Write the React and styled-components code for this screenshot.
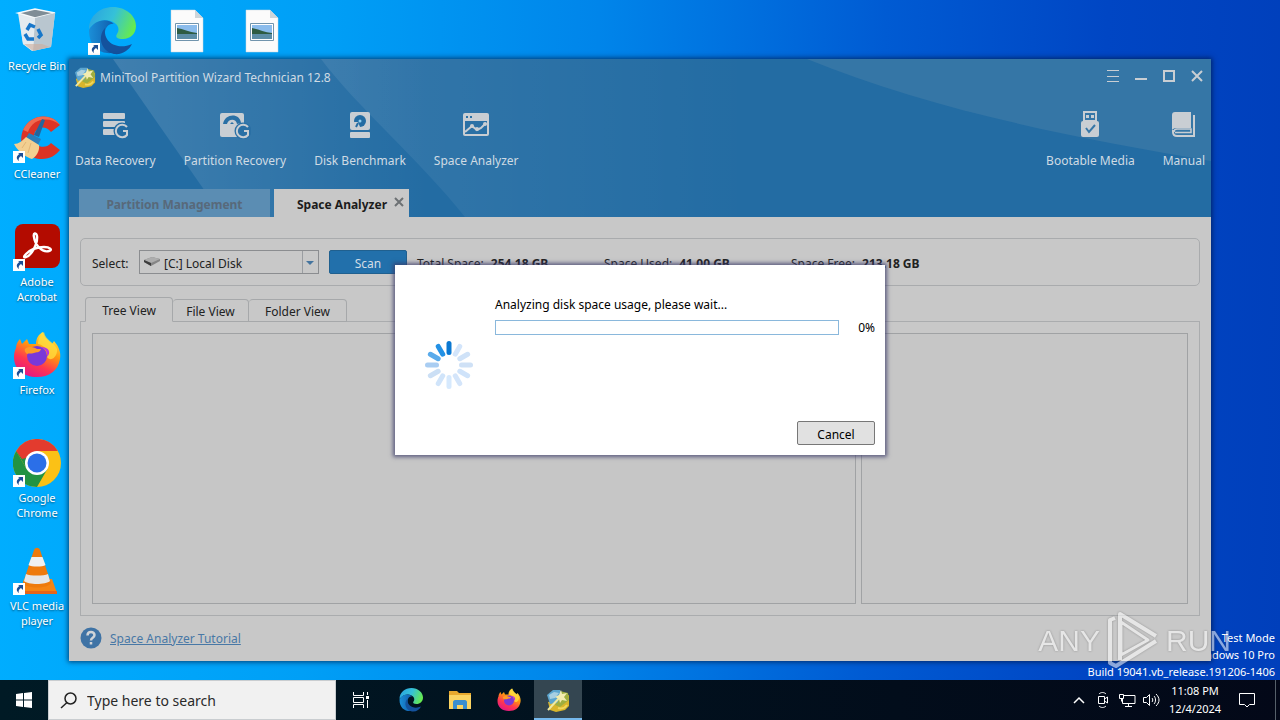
import React from 'react';
import styled, { createGlobalStyle } from 'styled-components';

const GlobalStyle = createGlobalStyle`
    * {
        box-sizing: border-box;
    }
    body {
        margin: 0;
        overflow: hidden;
        font-family: 'Noto Sans', 'Open Sans', sans-serif;
        font-size: 12px;
        line-height: 18px;
    }
    button, select, input {
        font: inherit;
        color: inherit;
        border: 0;
        padding: 0;
        margin: 0;
        background: none;
        border-radius: 0;
    }
`;

/* ---------- desktop ---------- */

const Screen = styled.div`
    height: 100vh;
    display: flex;
    flex-direction: column;
    overflow: hidden;
`;

const Desktop = styled.main`
    position: relative;
    flex: 1;
    min-height: 0;
    background: linear-gradient(
        92deg,
        #00aeff 0%,
        #009ff6 25%,
        #0085ea 46%,
        #005bd3 68%,
        #0046c4 85%,
        #003fbb 100%
    );
`;

const IconGrid = styled.div`
    display: grid;
    grid-template-rows: repeat(6, 108px);
    grid-auto-columns: 74px;
    grid-auto-flow: column;
    column-gap: 1px;
    justify-content: start;
    padding-top: 7px;
`;

const Shortcut = styled.button`
    grid-row: ${(props) => props.$row};
    grid-column: ${(props) => props.$col};
    display: flex;
    flex-direction: column;
    align-items: center;
    gap: 3px;
    color: #fff;
    font-size: 11px;
    line-height: 15px;
    text-shadow: 0 1px 2px rgba(0, 0, 0, 0.5);
    svg {
        flex: none;
    }
`;

const ShortcutLabel = styled.span`
    max-width: 66px;
`;

const Build = styled.div`
    position: absolute;
    right: 5px;
    bottom: 0;
    color: #fff;
    font-size: 11px;
    line-height: 17px;
    text-align: right;
`;

/* ---------- application window ---------- */

const Window = styled.section`
    position: absolute;
    inset: 59px 69px 19px;
    display: flex;
    flex-direction: column;
    background: #c8c8c8;
    color: #222;
    box-shadow: 0 0 5px 1px rgba(0, 20, 60, 0.7);
`;

const Header = styled.header`
    position: relative;
    background: #236ca3;
    color: #cfdbe4;
`;

const Backdrop = styled.svg`
    position: absolute;
    width: 100%;
    height: 100%;
`;

const TitleBar = styled.div`
    position: relative;
    display: flex;
    align-items: center;
    height: 36px;
    padding: 0 7px 0 5px;
    gap: 4px;
`;

const Title = styled.h1`
    flex: 1;
    margin: 0;
    padding-top: 2px;
    font-size: 12px;
    font-weight: 400;
`;

const WindowButtons = styled.div`
    display: flex;
    gap: 14px;
    padding-bottom: 2px;
    button {
        width: 14px;
        height: 14px;
    }
    svg {
        display: block;
    }
`;

const Toolbar = styled.div`
    position: relative;
    display: flex;
    height: 94px;
    gap: 28px;
    padding: 16px 6px 0;
`;

const Tool = styled.button`
    display: flex;
    flex-direction: column;
    align-items: center;
    gap: 13px;
    align-self: start;
    white-space: nowrap;
    margin-left: ${(props) => (props.$pushed ? 'auto' : '0')};
`;

const PageTabs = styled.div`
    position: relative;
    display: flex;
    gap: 4px;
    padding-left: 10px;
`;

const PageTab = styled.div`
    display: flex;
    align-items: center;
    justify-content: ${(props) => (props.$active ? 'flex-end' : 'center')};
    gap: 7px;
    width: ${(props) => (props.$active ? '135px' : '191px')};
    height: 28px;
    padding: ${(props) => (props.$active ? '3px 5px 0 0' : '3px 0 0')};
    background: ${(props) => (props.$active ? '#c8c8c8' : '#5b8db3')};
    color: ${(props) => (props.$active ? '#1c1c1c' : '#58697a')};
    button {
        font-weight: 700;
    }
`;

const Body = styled.div`
    flex: 1;
    min-height: 0;
    display: flex;
    flex-direction: column;
    padding: 21px 11px 12px;
`;

const SelectBar = styled.div`
    display: flex;
    align-items: center;
    height: 48px;
    padding: 0 11px;
    border: 1px solid #a9abad;
    border-radius: 5px;
    white-space: nowrap;
`;

const SelectLabel = styled.label`
    width: 47px;
    padding-top: 3px;
`;

const DiskField = styled.div`
    display: flex;
    align-items: center;
    width: 180px;
    height: 24px;
    padding-left: 4px;
    border: 1px solid #8b8d90;
    select {
        flex: 1;
        height: 22px;
        padding: 3px 0 0 3px;
        appearance: none;
        outline: 0;
    }
    svg {
        flex: none;
        pointer-events: none;
    }
`;

const Arrow = styled.svg`
    border-left: 1px solid #9a9da1;
`;

const Scan = styled.button`
    width: 78px;
    height: 24px;
    margin: 0 10px;
    padding-top: 3px;
    background: #2270ab;
    border: 1px solid #20608f;
    border-radius: 2px;
    color: #d3dde6;
`;

const Stats = styled.dl`
    display: grid;
    grid-auto-flow: column;
    grid-auto-columns: 187px;
    margin: 0;
    padding-top: 3px;
    div {
        display: flex;
        gap: 7px;
    }
    dd {
        margin: 0;
        font-weight: 700;
    }
`;

const ViewTabs = styled.div`
    display: flex;
    align-items: flex-end;
    height: 36px;
    margin-bottom: -1px;
    padding-left: 5px;
    position: relative;
`;

const ViewTab = styled.button`
    height: ${(props) => (props.$active ? '25px' : '23px')};
    width: ${(props) => props.$width};
    padding-top: 3px;
    border: 1px solid #a6a8aa;
    border-left-width: ${(props) => (props.$active ? '1px' : '0')};
    border-bottom-color: ${(props) => (props.$active ? '#c8c8c8' : '#a6a8aa')};
    border-radius: 4px 4px 0 0;
    background: #c8c8c8;
`;

const Pane = styled.div`
    flex: 1;
    display: grid;
    grid-template-columns: 7fr 3fr;
    gap: 5px;
    padding: 11px;
    border: 1px solid #aaacae;
`;

const Box = styled.div`
    border: 1px solid #a0a2a4;
    background: #c6c6c6;
`;

const Footer = styled.footer`
    display: flex;
    align-items: center;
    gap: 8px;
    padding-top: 11px;
    a {
        color: #4878a6;
        padding-top: 2px;
        line-height: 20px;
    }
`;

/* ---------- progress dialog ---------- */

const Dialog = styled.div`
    position: absolute;
    top: 50%;
    left: 50%;
    transform: translate(-50%, -50%);
    display: grid;
    grid-template-columns: 68px 1fr;
    gap: 22px;
    width: 490px;
    height: 190px;
    padding: 10px;
    background: #fff;
    color: #000;
    box-shadow: 0 0 4px 2px rgba(60, 60, 105, 0.75);
    > svg {
        align-self: center;
        justify-self: center;
        margin-left: 20px;
        margin-top: 10px;
    }
`;

const DialogMain = styled.div`
    display: flex;
    flex-direction: column;
    padding-top: 21px;
`;

const ProgressRow = styled.div`
    display: flex;
    align-items: center;
    justify-content: space-between;
    height: 26px;
    span {
        padding-top: 2px;
    }
`;

const Progress = styled.progress`
    appearance: none;
    width: 344px;
    height: 15px;
    border: 1px solid #8ab8dc;
    background: #fff;
    &::-webkit-progress-bar {
        background: #fff;
    }
    &::-webkit-progress-value {
        background: #2270ab;
    }
`;

const Cancel = styled.button`
    align-self: flex-end;
    width: 78px;
    height: 24px;
    margin-top: auto;
    padding-top: 3px;
    border: 1px solid #777;
    border-radius: 2px;
    background: #e1e1e1;
`;

/* ---------- watermark ---------- */

const Watermark = styled.div`
    position: absolute;
    right: 49px;
    bottom: 8px;
    display: flex;
    align-items: center;
    gap: 6px;
    color: #fff;
    opacity: 0.55;
    font-family: 'Liberation Sans', sans-serif;
    font-size: 30px;
    line-height: 62px;
    pointer-events: none;
    filter: drop-shadow(0 0 1px rgba(60, 60, 60, 0.7));
`;

/* ---------- taskbar ---------- */

const Taskbar = styled.footer`
    display: flex;
    height: 40px;
    background: linear-gradient(90deg, #001a25, #020d1b 70%, #030818);
    color: #fff;
`;

const TaskButton = styled.button`
    display: grid;
    place-items: center;
    width: ${(props) => (props.$wide ? '50px' : '48px')};
    height: 40px;
    margin-right: ${(props) => (props.$start ? '0' : '1px')};
    background: ${(props) => (props.$active ? '#344651' : 'none')};
    box-shadow: ${(props) => (props.$active ? 'inset 0 -2px #76b9ed' : 'none')};
`;

const Search = styled.label`
    display: flex;
    align-items: center;
    gap: 10px;
    width: 288px;
    padding-left: 11px;
    border: 1px solid #c9cdd0;
    background: #f1f1f1;
    color: #222;
    input {
        width: 220px;
        padding-top: 2px;
        font-size: 14px;
        outline: 0;
    }
    input::placeholder {
        color: #2a2a2a;
        opacity: 1;
    }
`;

const Tray = styled.div`
    display: flex;
    align-items: center;
    margin-left: auto;
    button {
        display: grid;
        place-items: center;
        width: 24px;
        height: 40px;
    }
    .clock {
        width: 64px;
        font-size: 11px;
    }
    .notes {
        width: 40px;
        margin-right: 8px;
    }
`;

const ShowDesktop = styled.span`
    width: 5px;
    height: 40px;
    border-left: 1px solid #56606a;
`;

/* ---------- drawings ---------- */

const ShortcutMark = () => (
    <g>
        <rect x="0" y="36" width="12" height="12" fill="#fff" />
        <path d="M5 38h5v5l-2-2c-2 1-3 3-2 5-3-2-3-5 .5-7z" fill="#1d4f96" />
    </g>
);

const EdgeShape = ({ size, mark }) => (
    <svg width={size} height={size} viewBox="0 0 48 48">
        <defs>
            <linearGradient id={`edgeTop${size}`} x1="0" x2="1" y1="0.2" y2="0.5">
                <stop offset="0" stopColor="#2aa4e0" />
                <stop offset="0.5" stopColor="#35c1d8" />
                <stop offset="1" stopColor="#66eb4f" />
            </linearGradient>
            <linearGradient id={`edgeLow${size}`} x1="0" x2="1">
                <stop offset="0" stopColor="#1b8fd8" />
                <stop offset="1" stopColor="#0c4a9b" />
            </linearGradient>
        </defs>
        <path d="M1 22C1 9 12 0 25 0c13 0 23 9 23 19 0 8-6 13-13 13-6 0-8-2-6-5 2-3 2-6 0-9-6-7-19-7-28 4z" fill={`url(#edgeTop${size})`} />
        <path d="M1 23c5-10 18-13 25-6-5-1-10 4-9 12 2 10 10 14 18 12-9 9-34 8-34-18z" fill={`url(#edgeLow${size})`} />
        <path d="M17 21c-8 9-4 23 9 26 9 1 15-4 18-10-13 6-29 0-27-16z" fill="#14529d" />
        {mark && <ShortcutMark />}
    </svg>
);

const FirefoxShape = ({ size, mark }) => (
    <svg width={size} height={size} viewBox="0 0 48 48">
        <defs>
            <linearGradient id={`fox${size}`} x1="0.8" x2="0.3" y1="0" y2="1">
                <stop offset="0" stopColor="#fff44f" />
                <stop offset="0.4" stopColor="#ff980e" />
                <stop offset="0.7" stopColor="#ff3750" />
                <stop offset="1" stopColor="#e31587" />
            </linearGradient>
        </defs>
        <path d="M3 17c0-4 2-7 4-9l2 5 5-5 2 5h7c0-6 3-10 7-12 1 6 5 8 9 12l2-3c5 6 7 11 6 18-2 12-11 18-23 18C10 46 1 38 1 26c0-4 1-7 2-9z" fill={`url(#fox${size})`} />
        <path d="M31 1c-4 3-6 7-6 12 6 1 10 6 9 13 5 6 11-2 10-8-2-6-12-9-13-17z" fill="#ffdc3e" opacity="0.8" />
        <circle cx="24" cy="25" r="10" fill="#7a38d8" />
        <path d="M12 18c3-3 9-2 12 0h4c-1 4-5 3-7 4-3 1-5 0-7 1-1-1-3-3-2-5z" fill="#ff9a26" />
        <path d="M27 16c5 1 8 5 7 10 5-5 1-11-7-10z" fill="#b833e1" />
        {mark && <ShortcutMark />}
    </svg>
);

const RecycleBin = () => (
    <svg width="48" height="48" viewBox="0 0 48 48">
        <path d="M5 6 22 2l20 4-4 34-19 4-9-7z" fill="#dfe7ec" />
        <path d="M5 6l17 5 20-5-20-4z" fill="#7f8d96" stroke="#f5f9fb" strokeWidth="1.5" />
        <path d="M22 11 20 44l18-4 4-34z" fill="#b9c6cf" />
        <path d="M6 8l4 29 10 7 2-33z" fill="#e4ebef" />
        <path d="M11 37l9 7 17-4-8-3z" fill="#cfae9b" opacity="0.6" />
        <g fill="none" stroke="#1777ca" strokeWidth="3.5">
            <path d="M14 23l3-5 5 2" />
            <path d="M25 22l3 6-3 3" />
            <path d="M21 32h-6l-3-5" />
        </g>
    </svg>
);

const CCleaner = () => (
    <svg width="48" height="48" viewBox="0 0 48 48">
        <path d="M47 10C38-3 17-1 10 15c-6 16 4 29 19 29 8 0 14-4 18-9l-9-7c-6 7-17 4-17-6s11-13 17-5z" fill="#dc3325" />
        <path d="M47 10C38-3 17-1 10 15l5 2C20 3 36 1 47 10z" fill="#ef6b50" />
        <path d="M29 4l3 1-6 17-5-2z" fill="#24659c" />
        <path d="M16 18l12 6-3 6-12-7z" fill="#2b7eb9" />
        <path d="M13 22l13 8c1 6-3 12-7 14-6-2-13-6-18-15 5 0 8-3 12-7z" fill="#f2cf91" />
        <path d="M13 27l-4 6m9-5-3 10" stroke="#e2b575" />
        <ShortcutMark />
    </svg>
);

const Acrobat = () => (
    <svg width="48" height="48" viewBox="0 0 48 48">
        <rect x="2" y="1" width="45" height="44" rx="8" fill="#b30b00" />
        <path d="M13 34c5-1 12-13 11-21-1-4-4-3-3 1 1 8 8 16 15 14 4-1 1-4-5-4-7 0-14 3-18 7-3 3-2 4 0 3z" fill="none" stroke="#fff" strokeWidth="2.4" />
        <ShortcutMark />
    </svg>
);

const Chrome = () => (
    <svg width="48" height="48" viewBox="0 0 48 48">
        <circle cx="24" cy="24" r="24" fill="#fbc116" />
        <path d="M3.200 12A24 24 0 0 0 24 48l10.400-18L24 24 13.600 30z" fill="#229342" />
        <path d="M3.200 12l10.400 18L24 12z" fill="#229342" />
        <path d="M3.200 12A24 24 0 0 1 44.800 12H24L13 19 9 20z" fill="#e33b2e" />
        <circle cx="24" cy="24" r="12" fill="#fff" />
        <circle cx="24" cy="24" r="9.500" fill="#2b6fe8" />
        <ShortcutMark />
    </svg>
);

const Vlc = () => (
    <svg width="48" height="48" viewBox="0 0 48 48">
        <path d="M11 32h28l5 14H7z" fill="#f58413" />
        <path d="M7 44h37v3H7z" fill="#e5651a" />
        <path d="M21 3c1-3 5-3 6 0l11 33c-3 6-25 6-28 0z" fill="#ee7a0c" />
        <path d="M18.500 10h11l3 8c-3 2-14 2-17 0z" fill="#f0f0f0" />
        <path d="M13 27c4 2 18 2 22 0l2 7c-4 4-22 4-26 0z" fill="#e6e6e6" />
        <ShortcutMark />
    </svg>
);

const PictureFile = () => (
    <svg width="48" height="48" viewBox="0 0 48 48">
        <path d="M8 3h24l8 8v34H8z" fill="#fbfbfb" stroke="#c8d4dc" strokeWidth="0.500" />
        <path d="M32 3v8h8z" fill="#ccd5da" />
        <path d="M12.500 16.500h23v17h-23z" fill="#fff" stroke="#7194ad" />
        <path d="M14 18h20v8H14z" fill="#8bbcec" />
        <path d="M14 21c6 1 12 4 20 5v2H14z" fill="#2e5c43" />
        <path d="M14 27h20v5H14z" fill="#5b8da6" />
    </svg>
);

const MiniTool = ({ size }) => (
    <svg width={size} height={size} viewBox="0 0 24 24">
        <path d="M2 14l10-2 11-5v11l-4 4-9 2-6-2z" fill="#d9b52b" />
        <path d="M14 3l8 2 1 7-9 7-5-2z" fill="#9fae3f" />
        <path d="M1 7l6-5h7l2 4-5 9-7 1z" fill="#5ba5cf" />
        <path d="M3 7l5-3 5 1-4 5-5 1z" fill="#a7cfe2" />
        <path d="M2 22 15 8" stroke="#f0e9a0" strokeWidth="2" />
        <path d="M15 2l1 4 5-1-3 4 3 4-5-1-2 3-1-4-4-2 4-2z" fill="#f3ecb0" />
        <path d="M12 20c3 1 7 0 9-3" stroke="#f1d75c" strokeWidth="2" fill="none" />
    </svg>
);

const ink = '#c9ced3';
const headerBlue = '#2a70a5';

const DataRecovery = () => (
    <svg width="28" height="28" viewBox="0 0 28 28">
        <rect x="2" y="2" width="22" height="6" rx="1" fill={ink} />
        <rect x="2" y="10" width="22" height="6" rx="1" fill={ink} />
        <rect x="2" y="18" width="13" height="6" rx="1" fill={ink} />
        <circle cx="21" cy="20" r="8.500" fill="#236ca3" />
        <path d="M26 16a6.300 6.300 0 1 0 0 8v-4h-4" fill="none" stroke={ink} strokeWidth="2" />
    </svg>
);

const PartitionRecovery = () => (
    <svg width="32" height="28" viewBox="0 0 32 28">
        <rect x="1" y="2" width="24" height="24" rx="2" fill={ink} />
        <path d="M4 13C6 2 21 2 22 12l-4 1c-1-6-9-5-10 0z" fill={headerBlue} />
        <path d="M11 13l2-2 2 2z" fill={headerBlue} />
        <circle cx="24" cy="20" r="8.500" fill={headerBlue} />
        <path d="M29 16a6.300 6.300 0 1 0 0 8v-4h-4" fill="none" stroke={ink} strokeWidth="2" />
    </svg>
);

const DiskBenchmark = () => (
    <svg width="28" height="28" viewBox="0 0 28 28">
        <rect x="4" y="1" width="20" height="18" rx="2" fill={ink} />
        <rect x="4" y="21" width="20" height="6" rx="1" fill={ink} />
        <circle cx="14" cy="10" r="6" fill="#236ca3" />
        <path d="M8 11h4l2 5c-4 1-6-1-6-5z" fill={ink} />
        <circle cx="14" cy="10" r="1.500" fill="#8fd0f0" />
        <path d="M10 16l2-4" stroke="#236ca3" strokeWidth="2" />
    </svg>
);

const SpaceAnalyzer = () => (
    <svg width="28" height="28" viewBox="0 0 28 28">
        <rect x="1" y="2" width="26" height="23" rx="2" fill={ink} />
        <path d="M3 10h22v13H3z" fill="#2a70a5" />
        <path d="M4 5h2v2H4zM8 5h2v2H8z" fill="#2a70a5" />
        <path d="M3 21l7-6 5 4 4-2 5-5" stroke={ink} strokeWidth="2" fill="none" />
        <circle cx="10" cy="15" r="2" fill={ink} />
        <circle cx="15" cy="18" r="2" fill={ink} />
        <circle cx="23" cy="13" r="2" fill={ink} />
    </svg>
);

const Bootable = () => (
    <svg width="28" height="28" viewBox="0 0 28 28">
        <path d="M7 0h14v11H7z" fill={ink} />
        <path d="M9 2h10v7H9z" fill="#3777a7" />
        <path d="M10 4h3v3h-3zM15 4h3v3h-3z" fill={ink} />
        <rect x="5" y="10" width="18" height="16" rx="2" fill={ink} />
        <path d="M10 17l3 4 6-7" stroke="#3777a7" strokeWidth="2" fill="none" />
    </svg>
);

const Manual = () => (
    <svg width="28" height="28" viewBox="0 0 28 28">
        <path d="M5 1h16v16H6c-2 0-3 1-4 2V4c0-2 1-3 3-3z" fill={ink} />
        <path d="M3 19v2c0 3 1 4 4 4h17V4" fill="none" stroke={ink} strokeWidth="2" />
        <path d="M5 21.500h16V18H7c-2 0-3 1-3 3" fill="none" stroke={ink} strokeWidth="1.500" />
    </svg>
);

const spokes = [
    '#0a78d2', '#d3e5fb', '#cfe2f8', '#cfe1f6', '#cfe3fa', '#d4e5fa',
    '#d6e9fd', '#d0e4fa', '#cbdff5', '#a9cdf2', '#5aabeb', '#2391e5',
];

const Spinner = () => (
    <svg width="48" height="48" viewBox="0 0 48 48">
        {spokes.map((color, i) => (
            <rect key={color} x="21.500" y="0" width="5" height="14" rx="2.500" fill={color} transform={`rotate(${i * 30} 24 24)`} />
        ))}
    </svg>
);

const tools = [
    { name: 'Data Recovery', icon: <DataRecovery /> },
    { name: 'Partition Recovery', icon: <PartitionRecovery /> },
    { name: 'Disk Benchmark', icon: <DiskBenchmark /> },
    { name: 'Space Analyzer', icon: <SpaceAnalyzer /> },
    { name: 'Bootable Media', icon: <Bootable />, pushed: true },
    { name: 'Manual', icon: <Manual /> },
];

const shortcuts = [
    { name: 'Recycle Bin', icon: <RecycleBin />, row: 1, col: 1 },
    { name: 'CCleaner', icon: <CCleaner />, row: 2, col: 1 },
    { name: 'Adobe Acrobat', icon: <Acrobat />, row: 3, col: 1 },
    { name: 'Firefox', icon: <FirefoxShape size={48} mark />, row: 4, col: 1 },
    { name: 'Google Chrome', icon: <Chrome />, row: 5, col: 1 },
    { name: 'VLC media player', icon: <Vlc />, row: 6, col: 1 },
    { icon: <EdgeShape size={48} mark />, row: 1, col: 2 },
    { icon: <PictureFile />, row: 1, col: 3 },
    { icon: <PictureFile />, row: 1, col: 4 },
];

const stats = [
    ['Total Space:', '254.18 GB'],
    ['Space Used:', '41.00 GB'],
    ['Space Free:', '213.18 GB'],
];

const AppHeader = () => (
    <Header>
        <Backdrop viewBox="0 0 1142 158" preserveAspectRatio="none">
            <defs>
                <linearGradient id="beam">
                    <stop offset="0" stopColor="#fff" stopOpacity="0.130" />
                    <stop offset="0.4" stopColor="#fff" stopOpacity="0.080" />
                    <stop offset="1" stopColor="#fff" stopOpacity="0" />
                </linearGradient>
                <linearGradient id="beamWide">
                    <stop offset="0" stopColor="#fff" stopOpacity="0.080" />
                    <stop offset="1" stopColor="#fff" stopOpacity="0" />
                </linearGradient>
            </defs>
            <path d="M44 0H360V158H154z" fill="url(#beam)" />
            <path d="M252 0H680V158H396C350 100 290 50 252 0z" fill="url(#beamWide)" />
            <path d="M738 0H1142V102C1000 78 860 50 738 0z" fill="#3576a6" />
        </Backdrop>
        <TitleBar>
            <MiniTool size={22} />
            <Title>MiniTool Partition Wizard Technician 12.8</Title>
            <WindowButtons>
                <button aria-label="Menu">
                    <svg width="14" height="14" stroke={ink}>
                        <path d="M1 1.500h12M1 7.500h12M1 12.500h12" />
                    </svg>
                </button>
                <button aria-label="Minimize">
                    <svg width="14" height="14" stroke={ink} strokeWidth="2">
                        <path d="M1 10h12" />
                    </svg>
                </button>
                <button aria-label="Maximize">
                    <svg width="14" height="14" stroke={ink} strokeWidth="2" fill="none">
                        <path d="M2 2h10v10H2z" />
                    </svg>
                </button>
                <button aria-label="Close">
                    <svg width="14" height="14" stroke={ink} strokeWidth="2">
                        <path d="M2 2l10 10M12 2 2 12" />
                    </svg>
                </button>
            </WindowButtons>
        </TitleBar>
        <Toolbar>
            {tools.map((tool) => (
                <Tool key={tool.name} $pushed={tool.pushed}>
                    {tool.icon}
                    {tool.name}
                </Tool>
            ))}
        </Toolbar>
        <PageTabs>
            <PageTab>
                <button>Partition Management</button>
            </PageTab>
            <PageTab $active>
                <button>Space Analyzer</button>
                <button aria-label="Close tab">
                    <svg width="10" height="12" stroke="#6d7174" strokeWidth="2">
                        <path d="M1 1l8 8M9 1 1 9" />
                    </svg>
                </button>
            </PageTab>
        </PageTabs>
    </Header>
);

const DiskSelect = () => (
    <DiskField>
        <svg width="17" height="12">
            <path d="M0 4l8-3 8 2v2l-9 5-7-4z" fill="#858585" />
            <path d="M0 4l8-3 8 2-9 4z" fill="#adadad" />
            <path d="M0 4l7 3v3L0 6z" fill="#3c3c3c" />
        </svg>
        <select id="disk" defaultValue="c">
            <option value="c">[C:] Local Disk</option>
        </select>
        <Arrow width="16" height="22">
            <path d="M3 10h8l-4 4z" fill="#44749e" />
        </Arrow>
    </DiskField>
);

const ProgressDialog = () => (
    <Dialog role="dialog" aria-labelledby="progressText">
        <Spinner />
        <DialogMain>
            <label id="progressText" htmlFor="progress">
                Analyzing disk space usage, please wait...
            </label>
            <ProgressRow>
                <Progress id="progress" value="0" max="100" />
                <span>0%</span>
            </ProgressRow>
            <Cancel>Cancel</Cancel>
        </DialogMain>
    </Dialog>
);

const TaskbarRow = () => (
    <Taskbar>
        <TaskButton $start aria-label="Start">
            <svg width="16" height="16" fill="#fff">
                <path d="M0 2l7-1v6.500H0zM8 1l8-1v7.500H8zM0 8.500h7V15l-7-1zM8 8.500h8V16l-8-1z" />
            </svg>
        </TaskButton>
        <Search>
            <svg width="17" height="17" stroke="#222" strokeWidth="1.500" fill="none">
                <circle cx="10.500" cy="6.500" r="5.500" />
                <path d="M7 10.500 1 16" />
            </svg>
            <input placeholder="Type here to search" aria-label="Type here to search" />
        </Search>
        <TaskButton $wide aria-label="Task View">
            <svg width="18" height="16" stroke="#fff" fill="none">
                <path d="M1.500 0v3.500h10V0M1.500 16v-3.500h10V16M1.500 5.500h10v5h-10zM15.500 0v3M15.500 8v8" />
                <path d="M14 4h3v3h-3z" fill="#fff" stroke="none" />
            </svg>
        </TaskButton>
        <TaskButton aria-label="Edge">
            <EdgeShape size={24} />
        </TaskButton>
        <TaskButton aria-label="File Explorer">
            <svg width="22" height="20">
                <path d="M0 1h8l2 2h12v16H0z" fill="#e8a92e" />
                <path d="M0 5h22v14H0z" fill="#fbd462" />
                <path d="M4 19v-7c0-1 1-2 2-2h10c1 0 2 1 2 2v7h-4v-4H8v4z" fill="#3b8fd0" />
            </svg>
        </TaskButton>
        <TaskButton aria-label="Firefox">
            <FirefoxShape size={24} />
        </TaskButton>
        <TaskButton $active aria-label="MiniTool Partition Wizard">
            <MiniTool size={24} />
        </TaskButton>
        <Tray>
            <button aria-label="Hidden icons">
                <svg width="12" height="8" stroke="#fff" fill="none" strokeWidth="1.500">
                    <path d="M1 7l5-5 5 5" />
                </svg>
            </button>
            <button aria-label="Meet Now">
                <svg width="14" height="18" stroke="#fff" fill="none">
                    <path d="M2.500 5.500h6v7h-6zM8.500 8l3-2v6l-3-2M3 3c2-2 5-2 7 0M3 15c2 2 5 2 7 0" />
                </svg>
            </button>
            <button aria-label="Network">
                <svg width="17" height="14" stroke="#fff" fill="none">
                    <path d="M5 2.500h11v8H3.500V6M6 13.500h7M9.500 10.500v3M.5 1.500h4v4h-4zM2.500 5.500v3" />
                </svg>
            </button>
            <button aria-label="Volume">
                <svg width="17" height="14" stroke="#fff" fill="none">
                    <path d="M.5 4.500h3l3-3v11l-3-3h-3zM9 5c1 1 1 3 0 4M11 3c2 2 2 6 0 8M13 1c4 4 4 8 0 12" />
                </svg>
            </button>
            <button className="clock">
                <span>
                    11:08 PM
                    <br />
                    12/4/2024
                </span>
            </button>
            <button className="notes" aria-label="Notifications">
                <svg width="16" height="16" stroke="#fff" fill="none">
                    <path d="M.5 1.500h15v11h-5l-2.500 2.500-2.500-2.500h-5z" />
                </svg>
            </button>
            <ShowDesktop />
        </Tray>
    </Taskbar>
);

const App = () => (
    <Screen>
        <GlobalStyle />
        <Desktop>
            <IconGrid>
                {shortcuts.map((item) => (
                    <Shortcut key={`${item.row}-${item.col}`} $row={item.row} $col={item.col}>
                        {item.icon}
                        {item.name && <ShortcutLabel>{item.name}</ShortcutLabel>}
                    </Shortcut>
                ))}
            </IconGrid>
            <Build>
                Test Mode
                <br />
                Windows 10 Pro
                <br />
                Build 19041.vb_release.191206-1406
            </Build>
            <Window>
                <AppHeader />
                <Body>
                    <SelectBar>
                        <SelectLabel htmlFor="disk">Select:</SelectLabel>
                        <DiskSelect />
                        <Scan>Scan</Scan>
                        <Stats>
                            {stats.map(([label, value]) => (
                                <div key={label}>
                                    <dt>{label}</dt>
                                    <dd>{value}</dd>
                                </div>
                            ))}
                        </Stats>
                    </SelectBar>
                    <ViewTabs>
                        <ViewTab $active $width="88px">Tree View</ViewTab>
                        <ViewTab $width="76px">File View</ViewTab>
                        <ViewTab $width="98px">Folder View</ViewTab>
                    </ViewTabs>
                    <Pane>
                        <Box />
                        <Box />
                    </Pane>
                    <Footer>
                        <svg width="22" height="22" fill="none" stroke="#d0d4d8" strokeWidth="2.500">
                            <circle cx="11" cy="11" r="10.500" fill="#3f73a5" stroke="none" />
                            <path d="M7.500 8.500c0-5 7-4.500 7-.5 0 3-3.500 2.500-3.500 5.500M11 15v2.500" />
                        </svg>
                        <a href="#tutorial">Space Analyzer Tutorial</a>
                    </Footer>
                </Body>
                <ProgressDialog />
            </Window>
            <Watermark>
                <span>ANY</span>
                <svg width="54" height="62" fill="none" stroke="#fff" strokeWidth="4" strokeLinejoin="round">
                    <path d="M14 50V4l36 22" />
                    <path d="M50 31 10 56 4 53V10l5-2" />
                    <path d="M15 12v33l27-15z" strokeWidth="3" />
                </svg>
                <span>RUN</span>
            </Watermark>
        </Desktop>
        <TaskbarRow />
    </Screen>
);

export default App;
